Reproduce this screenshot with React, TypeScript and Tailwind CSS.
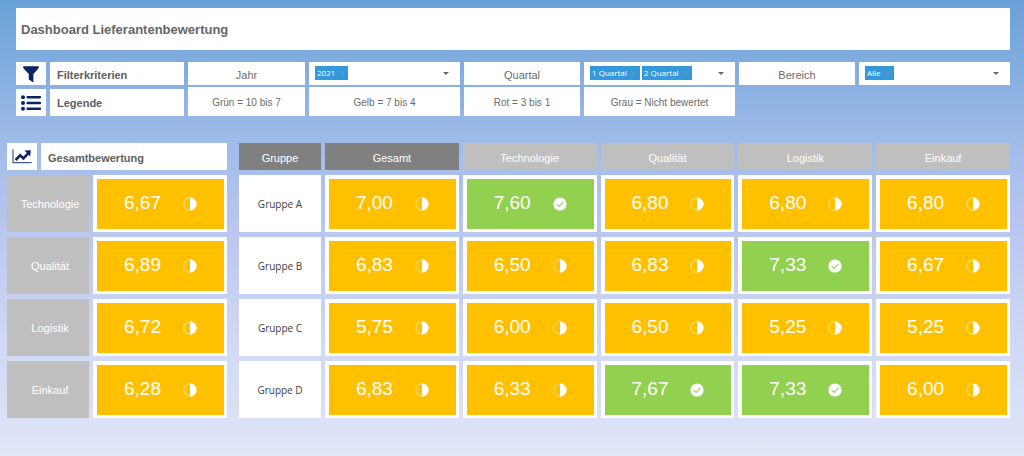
import { useState } from "react";

const SCORES: { group: string; values: number[] }[] = [
  { group: "Gruppe A", values: [7.0, 7.6, 6.8, 6.8, 6.8] },
  { group: "Gruppe B", values: [6.83, 6.5, 6.83, 7.33, 6.67] },
  { group: "Gruppe C", values: [5.75, 6.0, 6.5, 5.25, 5.25] },
  { group: "Gruppe D", values: [6.83, 6.33, 7.67, 7.33, 6.0] },
];

const TOTALS: { label: string; value: number }[] = [
  { label: "Technologie", value: 6.67 },
  { label: "Qualität", value: 6.89 },
  { label: "Logistik", value: 6.72 },
  { label: "Einkauf", value: 6.28 },
];

const CATEGORIES = ["Technologie", "Qualität", "Logistik", "Einkauf"];

function HalfIcon() {
  return (
    <svg viewBox="0 0 14 14" className="size-[14px] shrink-0" aria-hidden="true">
      <circle cx="7" cy="7" r="6.2" fill="none" stroke="#fff" strokeWidth="0.7" strokeOpacity="0.8" />
      <path d="M7 0.5a6.5 6.5 0 0 1 0 13z" fill="#fff" />
    </svg>
  );
}

function CheckIcon() {
  return (
    <svg viewBox="0 0 14 14" className="size-[14px] shrink-0" aria-hidden="true">
      <circle cx="7" cy="7" r="6.6" fill="#fff" />
      <path d="M3.8 7.3l2.3 2.2 4.2-4.6" fill="none" stroke="#92d050" strokeWidth="1.1" />
    </svg>
  );
}

function FunnelIcon() {
  return (
    <svg viewBox="0 0 16 17" className="h-[17px] w-4" aria-hidden="true">
      <path
        d="M0.6 0.3h14.8q0.6 0 0.5 0.7q-0.1 1.2-1 2.1L10.4 8v8.6L5.8 13.4V8L1.1 3.1Q0.2 2.2 0.1 1q0-0.7 0.5-0.7z"
        fill="#0a2463"
      />
    </svg>
  );
}

function ListIcon() {
  return (
    <svg viewBox="0 0 20 16" className="h-4 w-5" fill="#0a2463" aria-hidden="true">
      <circle cx="2" cy="2.2" r="2" />
      <circle cx="2" cy="8" r="2" />
      <circle cx="2" cy="13.8" r="2" />
      <rect x="5.5" y="1" width="14.5" height="2.4" rx="0.8" />
      <rect x="5.5" y="6.8" width="14.5" height="2.4" rx="0.8" />
      <rect x="5.5" y="12.6" width="14.5" height="2.4" rx="0.8" />
    </svg>
  );
}

function ChartIcon() {
  return (
    <svg viewBox="0 0 20 15" className="h-[15px] w-5" aria-hidden="true">
      <path d="M1 0.3v13.4h18.6" fill="none" stroke="#44598a" strokeWidth="1.2" />
      <path d="M3.6 11l4.6-4.6 3.2 3 5-5.2" fill="none" stroke="#0a2463" strokeWidth="2.6" />
      <path d="M12.4 1.6l6.4-0.4-0.6 6.2z" fill="#0a2463" />
    </svg>
  );
}

function Score({ value }: { value: number }) {
  const good = value > 7;
  return (
    <td className="bg-white pt-1 pr-[3px] pb-[3px] pl-1">
      <div
        className={`flex h-[50px] items-center justify-center gap-[22px] pb-px ${good ? "bg-[#92d050]" : "bg-[#ffc000]"}`}
      >
        <span className="pb-px text-[19px] leading-6 text-white">{value.toFixed(2).replace(".", ",")}</span>
        {good ? <CheckIcon /> : <HalfIcon />}
      </div>
    </td>
  );
}

function MultiSelect({ id, options, initial }: { id: string; options: string[]; initial: string[] }) {
  const [selected, setSelected] = useState(initial);
  return (
    <div className="flex min-w-0 items-start gap-[2px] bg-white pt-1 pl-[6px]">
      {selected.map((item) => (
        <span
          key={item}
          className="flex h-[14px] shrink-0 items-center gap-[3px] bg-[#3498db] px-[2px] font-['Open_Sans',sans-serif] text-[8px] leading-3 text-white"
        >
          {item}
          <button
            type="button"
            aria-label={`${item} entfernen`}
            className="flex size-2 items-center justify-center text-[#5f9cc9]"
            onClick={() => setSelected(selected.filter((s) => s !== item))}
          >
            <svg viewBox="0 0 6 6" className="size-[5px]" aria-hidden="true">
              <path d="M1 1l4 4M5 1l-4 4" stroke="currentColor" strokeWidth="1" />
            </svg>
          </button>
        </span>
      ))}
      <div className="grid h-[14px] min-w-0 flex-1 items-center">
        <select
          id={id}
          value=""
          onChange={(e) => setSelected([...selected, e.target.value])}
          className="col-start-1 row-start-1 h-[14px] w-full min-w-0 appearance-none bg-transparent text-[8px] outline-none"
        >
          <option value="" />
          {options
            .filter((o) => !selected.includes(o))
            .map((o) => (
              <option key={o} value={o}>
                {o}
              </option>
            ))}
        </select>
        <svg
          viewBox="0 0 6 3"
          className="pointer-events-none col-start-1 row-start-1 mr-[11px] h-[3px] w-[6px] justify-self-end"
          aria-hidden="true"
        >
          <path d="M0 0h6L3 3z" fill="#666" />
        </svg>
      </div>
    </div>
  );
}

const FILTER_LABEL = "flex items-center justify-center bg-white pt-[3px] text-[11px] leading-4 text-[#6b6b6b]";
const LEGEND = "flex items-center justify-center bg-white pt-[3px] text-[10px] leading-4 text-[#6b6b6b]";
const HEADING = "bg-white text-[11px] leading-4 font-bold text-[#606060]";

export default function App() {
  return (
    <div className="min-h-screen bg-[linear-gradient(to_bottom,#69a2d8_0%,#8cb1e2_20%,#a1bce9_32%,#b9c6ef_50%,#d0d8f4_75%,#e0e5f7_100%)] pt-2 pb-8 font-['Liberation_Sans',Arial,sans-serif]">
      <header className="mr-[14px] ml-4 flex h-[42px] items-center bg-white pt-[2px] pl-[5px]">
        <h1 className="text-[13px] leading-5 font-bold text-[#666]">Dashboard Lieferantenbewertung</h1>
      </header>

      <section className="mt-3 mr-[14px] ml-4 grid grid-cols-[30px_134px_117fr_151fr_116fr_151fr_116fr_151fr] grid-rows-[23px_29px] gap-x-1 gap-y-[2px]">
        <div className="flex items-center justify-center bg-white pt-[2px]">
          <FunnelIcon />
        </div>
        <h2 className={`${HEADING} flex items-center pt-[3px] pl-[7px]`}>Filterkriterien</h2>
        <label htmlFor="jahr" className={FILTER_LABEL}>
          Jahr
        </label>
        <MultiSelect id="jahr" options={["2020", "2021", "2022"]} initial={["2021"]} />
        <label htmlFor="quartal" className={FILTER_LABEL}>
          Quartal
        </label>
        <MultiSelect
          id="quartal"
          options={["1 Quartal", "2 Quartal", "3 Quartal", "4 Quartal"]}
          initial={["1 Quartal", "2 Quartal"]}
        />
        <label htmlFor="bereich" className={FILTER_LABEL}>
          Bereich
        </label>
        <MultiSelect id="bereich" options={["Alle", ...CATEGORIES]} initial={["Alle"]} />

        <div className="mt-[2px] flex items-center justify-center bg-white">
          <ListIcon />
        </div>
        <h2 className={`${HEADING} mt-[2px] flex items-center pt-px pl-[7px]`}>Legende</h2>
        <p className={LEGEND}>Grün = 10 bis 7</p>
        <p className={LEGEND}>Gelb = 7 bis 4</p>
        <p className={LEGEND}>Rot = 3 bis 1</p>
        <p className={LEGEND}>Grau = Nicht bewertet</p>
      </section>

      <main className="mt-[22px] mr-[10px] ml-[3px] flex gap-1">
        <section className="w-[228px] shrink-0 pt-[5px]">
          <div className="mx-1 flex h-[27px] gap-1">
            <div className="flex w-[30px] items-center justify-center bg-white">
              <ChartIcon />
            </div>
            <h2 className={`${HEADING} flex flex-1 items-center pt-[2px] pl-[7px]`}>Gesamtbewertung</h2>
          </div>
          <table className="w-full table-fixed border-separate border-spacing-x-1 border-spacing-y-[5px]">
            <colgroup>
              <col className="w-[82px]" />
              <col />
            </colgroup>
            <tbody>
              {TOTALS.map((t) => (
                <tr key={t.label}>
                  <th scope="row" className="bg-[#bfbfbf] pr-0 pl-1 text-[11px] leading-4 font-normal text-white">
                    {t.label}
                  </th>
                  <Score value={t.value} />
                </tr>
              ))}
            </tbody>
          </table>
        </section>

        <table className="min-w-0 flex-1 table-fixed border-separate border-spacing-x-1 border-spacing-y-[5px]">
          <colgroup>
            <col className="w-[82px]" />
            <col span={5} />
          </colgroup>
          <thead>
            <tr className="h-[27px] text-[11px] leading-4 text-white">
              <th scope="col" className="bg-[#808080] px-0 pt-[2px] pb-0 font-normal">
                Gruppe
              </th>
              <th scope="col" className="bg-[#808080] px-0 pt-[2px] pb-0 font-normal">
                Gesamt
              </th>
              {CATEGORIES.map((c) => (
                <th key={c} scope="col" className="bg-[#bfbfbf] px-0 pt-[2px] pb-0 font-normal">
                  {c}
                </th>
              ))}
            </tr>
          </thead>
          <tbody>
            {SCORES.map((row) => (
              <tr key={row.group}>
                <th
                  scope="row"
                  className="bg-white p-0 font-['Open_Sans',sans-serif] text-[10px] leading-4 font-normal text-[#404040]"
                >
                  {row.group}
                </th>
                {row.values.map((v, i) => (
                  <Score key={i} value={v} />
                ))}
              </tr>
            ))}
          </tbody>
        </table>
      </main>
    </div>
  );
}
